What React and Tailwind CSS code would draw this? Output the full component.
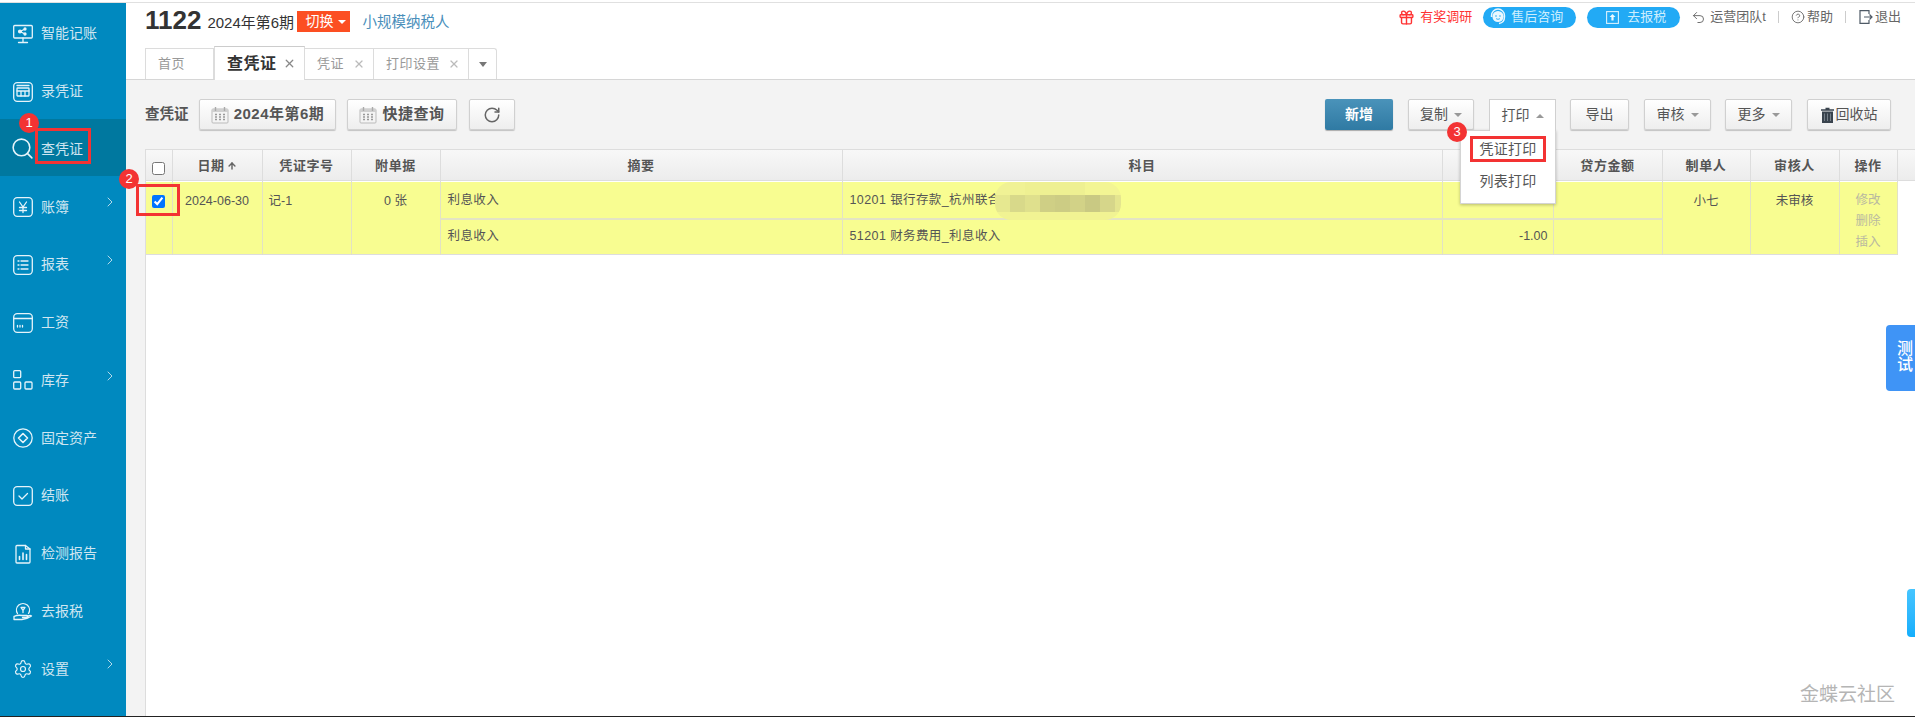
import React from 'react';
import { Search, ChevronRight, Settings, RotateCw, Gift, Undo2, CircleHelp, ArrowUp, X } from 'lucide-react';

const FONT = '"Liberation Sans", "Noto Sans CJK SC", sans-serif';

const Svg = ({ children }) => (
  <svg viewBox="0 0 20 20" className="w-5 h-5 shrink-0" fill="none" stroke="currentColor" strokeWidth="1.3" strokeLinecap="round" strokeLinejoin="round">
    {children}
  </svg>
);

const icons = {
  smart: (
    <Svg>
      <rect x="0.7" y="1.5" width="18.6" height="12.5" rx="1" />
      <path d="M10 14v4M5.5 18.5h9" />
      <circle cx="7" cy="7.5" r="1.4" fill="currentColor" />
      <circle cx="12" cy="5" r="1" fill="currentColor" />
      <circle cx="12" cy="10" r="1" fill="currentColor" />
      <path d="M7 7.5l5-2.5M7 7.5l5 2.5" />
    </Svg>
  ),
  entry: (
    <Svg>
      <rect x="0.7" y="0.7" width="18.6" height="18.6" rx="3.5" />
      <rect x="4" y="6" width="12" height="8" rx="0.5" />
      <path d="M4 9h12M8 9v5M12 9v5M4 3.5h12" />
    </Svg>
  ),
  search: <Search size={25} strokeWidth={1.5} className="-ml-0.5 -mt-0.5 shrink-0" />,
  ledger: (
    <Svg>
      <rect x="0.7" y="0.7" width="18.6" height="18.6" rx="3.5" />
      <path d="M6.5 5l3.5 5 3.5-5M6.5 10.5h7M6.5 13.5h7M10 10v5.5" />
    </Svg>
  ),
  report: (
    <Svg>
      <rect x="0.7" y="0.7" width="18.6" height="18.6" rx="3.5" />
      <path d="M5 6h1M8 6h7M5 10h1M8 10h7M5 14h1M8 14h7" />
    </Svg>
  ),
  salary: (
    <Svg>
      <rect x="0.7" y="0.7" width="18.6" height="18.6" rx="3.5" />
      <path d="M1 5.5h18M4.5 12.5v1.5M7 12.5v1.5M9.5 12.5v1.5" />
    </Svg>
  ),
  stock: (
    <Svg>
      <rect x="0.7" y="0.7" width="7" height="7" rx="1" />
      <rect x="0.7" y="12" width="7" height="7" rx="1" />
      <rect x="12" y="12" width="7" height="7" rx="1" />
    </Svg>
  ),
  asset: (
    <Svg>
      <circle cx="10" cy="10" r="9.2" />
      <path d="M10 5.5l4.5 4.5-4.5 4.5L5.5 10z" strokeWidth="1.6" />
    </Svg>
  ),
  close: (
    <Svg>
      <rect x="0.7" y="0.7" width="18.6" height="18.6" rx="3.5" />
      <path d="M6 10l3 3 5.5-5.5" />
    </Svg>
  ),
  check: (
    <Svg>
      <path d="M3 2.5a1 1 0 0 1 1-1h8.5L17 5v13a1 1 0 0 1-1 1H4a1 1 0 0 1-1-1z" />
      <path d="M12.5 1.5V5H17" />
      <path d="M6.5 15.5v-3M10 15.5V9M13.5 15.5v-5" strokeWidth="1.6" />
    </Svg>
  ),
  tax: (
    <Svg>
      <path d="M4.5 12.5a6.5 6.5 0 1 1 11 0" />
      <path d="M8 6.5h4l-2 3zM10 9.5v2" />
      <path d="M1 15.5c3-1.5 5-1.5 8-1h5c1.5 0 1.5 2 0 2H9.5M1 15.5v3h8c3 0 6-1 9.5-3.5-1-1-3-.5-4.5 1" />
    </Svg>
  ),
  settings: <Settings size={20} strokeWidth={1.4} />,
};

const menu = [
  { label: '智能记账', icon: icons.smart },
  { label: '录凭证', icon: icons.entry },
  { label: '查凭证', icon: icons.search, active: true },
  { label: '账簿', icon: icons.ledger, more: true },
  { label: '报表', icon: icons.report, more: true },
  { label: '工资', icon: icons.salary },
  { label: '库存', icon: icons.stock, more: true },
  { label: '固定资产', icon: icons.asset },
  { label: '结账', icon: icons.close },
  { label: '检测报告', icon: icons.check },
  { label: '去报税', icon: icons.tax },
  { label: '设置', icon: icons.settings, more: true },
];

const Badge = ({ n, className }) => (
  <span className={`absolute z-20 w-5 h-5 rounded-full bg-[#f33333] text-white text-[13px] flex items-center justify-center ${className}`}>
    {n}
  </span>
);

const Sidebar = () => (
  <aside className="relative w-[126px] shrink-0 bg-[#0089bf] text-[#cfe6f1]">
    {menu.map((item) => (
      <div key={item.label} className={`relative h-[57.75px] flex items-center pl-[13px] pr-3 pt-[4px] text-[14px] ${item.active ? 'bg-[#00789f]' : ''}`}>
        <span className="w-5 h-6 flex items-center justify-center text-[#e6f4fa]">{item.icon}</span>
        <span className="ml-2">{item.label}</span>
        {item.more && <ChevronRight size={16} strokeWidth={1.3} className="absolute left-[102px] top-[18px]" />}
      </div>
    ))}
    <Badge n="1" className="left-[19px] top-[110px]" />
    <span className="absolute left-[35px] top-[125px] w-[56px] h-[36px] border-[3px] border-[#f33333]" />
  </aside>
);

const Tab = ({ label, active, closable = true, className = '' }) => (
  <div className={`flex items-center whitespace-nowrap border-t border-r border-[#dcdcdc] bg-white ${active ? 'h-[34px] -mb-px font-bold text-[16px] text-[#333] pl-[12px] pr-[8px] border-l border-t-[#ccc]' : 'h-[31px] text-[13px] text-[#999] pl-3 pr-2'} ${className}`}>
    <span className="tracking-[0.5px]">{label}</span>
    {closable && <X size={active ? 13 : 12} strokeWidth={2.4} className={`ml-auto ${active ? 'text-[#888]' : 'text-[#bbb]'}`} />}
  </div>
);

const ServiceIcon = () => (
  <svg viewBox="0 0 18 18" className="w-[18px] h-[18px] shrink-0">
    <circle cx="9" cy="8.5" r="5.6" fill="#eaf7fe" />
    <path d="M2.5 9V7.5a6.5 6.5 0 0 1 13 0V9M15.5 9c0 3.5-2.5 6-5.5 6.5" fill="none" stroke="#eaf7fe" strokeWidth="1.4" />
    <circle cx="7" cy="8" r="0.8" fill="#22aaf5" />
    <circle cx="11" cy="8" r="0.8" fill="#22aaf5" />
    <path d="M7 10.5c1 1 3 1 4 0" fill="none" stroke="#22aaf5" strokeWidth="0.9" />
  </svg>
);

const UploadIcon = () => (
  <svg viewBox="0 0 13 13" className="w-[13px] h-[13px] shrink-0">
    <rect x="0.6" y="0.6" width="11.8" height="11.8" fill="none" stroke="#d9f1fd" strokeWidth="1.1" />
    <path d="M6.5 3l3 3H7.6v3.5H5.4V6H3.5z" fill="#eaf7fe" />
  </svg>
);

const ExitIcon = () => (
  <svg viewBox="0 0 16 16" className="w-[16px] h-[16px] shrink-0" fill="none" stroke="#4f5a66" strokeWidth="1.2">
    <path d="M11 5V1.6H2V14.4h9V11" />
    <path d="M6 8h8M11.5 5.5L14 8l-2.5 2.5" />
  </svg>
);

const Header = () => (
  <header className="h-[77px] shrink-0 border-b border-[#d6d6d6] bg-white flex flex-col">
    <div className="flex items-start pl-[19px] pr-[14px] h-[46px]">
      <span className="text-[26px] font-bold leading-[34px] text-[#333]">1122</span>
      <span className="ml-[6px] mt-[10px] text-[15px] leading-[20px] text-[#333] w-[90px] whitespace-nowrap">2024年第6期</span>
      <span className="mt-[8px] h-[21px] w-[53px] bg-[#fc4f22] text-white text-[14px] flex items-center pl-2">
        切换
        <span className="ml-[5px] border-x-[4px] border-t-[4px] border-x-transparent border-t-white" />
      </span>
      <span className="ml-3 mt-[9px] text-[14.5px] leading-[20px] text-[#4a8fbb]">小规模纳税人</span>
      <div className="ml-auto flex items-center h-[28px] text-[13px] text-[#666]">
        <Gift size={17} strokeWidth={2} className="text-[#f33]" />
        <span className="ml-[5px] text-[#f33]">有奖调研</span>
        <span className="ml-[11px] w-[93px] h-[21px] rounded-full bg-[#22aaf5] text-[#cdeefd] flex items-center pl-[6px] gap-[4px]">
          <ServiceIcon />
          售后咨询
        </span>
        <span className="ml-[11px] w-[93px] h-[21px] rounded-full bg-[#22aaf5] text-[#cdeefd] flex items-center pl-[19px] gap-[8px]">
          <UploadIcon />
          去报税
        </span>
        <Undo2 size={15} strokeWidth={1.5} className="ml-[11px]" />
        <span className="ml-[4px]">运营团队t</span>
        <span className="ml-3 h-[12px] w-px bg-[#ccc]" />
        <CircleHelp size={14} strokeWidth={1.5} className="ml-3" />
        <span className="ml-[2px]">帮助</span>
        <span className="ml-3 h-[12px] w-px bg-[#ccc]" />
        <span className="ml-3"><ExitIcon /></span>
        <span className="ml-[1px]">退出</span>
      </div>
    </div>
    <div className="flex items-end ml-[19px] mt-auto h-[34px]">
      <Tab label="首页" closable={false} className="w-[69px] border-l" />
      <Tab label="查凭证" active className="w-[91px]" />
      <Tab label="凭证" className="w-[69px]" />
      <Tab label="打印设置" className="w-[95px]" />
      <div className="h-[31px] w-[28px] flex items-center justify-center border-t border-r border-[#dcdcdc] rounded-tr-[3px]">
        <span className="border-x-[4px] border-t-[5px] border-x-transparent border-t-[#777]" />
      </div>
    </div>
  </header>
);

const CalIcon = () => (
  <svg viewBox="0 0 18 18" className="w-[18px] h-[18px] mr-[5px] shrink-0">
    <rect x="1" y="3" width="16" height="14" rx="1" fill="#f4f4f4" stroke="#bbbbbb" />
    <rect x="1" y="3" width="16" height="3" fill="#d0d0d0" />
    <path d="M4.5 1v4M13.5 1v4" stroke="#aaaaaa" strokeWidth="1.4" />
    <path d="M4 8.5h2M8 8.5h2M12 8.5h2M4 11h2M8 11h2M12 11h2M4 13.5h2M8 13.5h2M12 13.5h2" stroke="#999999" strokeWidth="1.3" />
  </svg>
);

const TrashIcon = () => (
  <svg viewBox="0 0 13 16" className="w-[13px] h-[16px] mr-[2px] shrink-0">
    <path d="M4.5 1.5h4M0 3h13" stroke="#39434d" strokeWidth="1.5" />
    <path d="M1 4.5h11V16H1z" fill="#39434d" />
    <path d="M3.5 6.5v7.5M6.5 6.5v7.5M9.5 6.5v7.5" stroke="#7d8790" strokeWidth="0.9" />
  </svg>
);

const btn = 'h-[31px] flex items-center justify-center rounded-[2px] border border-[#d0d0d0] bg-linear-to-b from-white to-[#eeeeee] shadow-[0_1px_1px_rgba(0,0,0,0.2)] text-[14px] text-[#555]';

const Caret = ({ up }) => (
  <span className={`ml-[6px] border-x-[4px] border-x-transparent ${up ? 'border-b-[4px] border-b-[#999]' : 'border-t-[4px] border-t-[#999]'}`} />
);

const Toolbar = () => (
  <div className="relative h-[69px] shrink-0 flex items-center pl-[19px] pr-[24px]">
    <span className="w-[54px] text-[14.5px] font-bold text-[#555]">查凭证</span>
    <button className={`${btn} w-[137px] text-[15px]! font-bold tracking-[0.5px]`}>
      <CalIcon />2024年第6期
    </button>
    <button className={`${btn} w-[110px] ml-[11px] text-[15px]! font-bold tracking-[0.5px]`}>
      <CalIcon />快捷查询
    </button>
    <button className={`${btn} w-[46px] ml-3`}>
      <RotateCw size={18} strokeWidth={2} className="text-[#666]" />
    </button>
    <button className="ml-auto w-[68px] h-[31px] rounded-[2px] bg-linear-to-b from-[#4a93ba] to-[#2f7aa3] shadow-[0_1px_1px_rgba(0,0,0,0.3)] text-[14px] font-bold text-white">新增</button>
    <button className={`${btn} w-[66px] ml-[15px]`}>复制<Caret /></button>
    <div className="relative ml-[15px] w-[67px] h-[31px]">
      <button className="w-full h-[32px] relative z-20 flex items-center justify-center border border-b-0 border-[#d0d0d0] bg-white text-[14px] text-[#555]">打印<Caret up /></button>
    </div>
    <button className={`${btn} w-[59px] ml-[14px]`}>导出</button>
    <button className={`${btn} w-[67px] ml-[15px]`}>审核<Caret /></button>
    <button className={`${btn} w-[67px] ml-[14px]`}>更多<Caret /></button>
    <button className={`${btn} w-[84px] ml-[15px]`}>
      <TrashIcon />回收站
    </button>
  </div>
);

const Dropdown = () => (
  <div className="absolute z-10 left-[1334px] top-[127px] w-[96px] h-[74px] border border-[#d4d4d4] bg-white shadow-[0_1px_3px_rgba(0,0,0,0.25)] text-[14px] text-[#555] flex flex-col items-center pt-[5px]">
    <span className="h-[26px] w-[76px] shrink-0 flex items-center justify-center outline-[3px] outline-[#f33333] -outline-offset-[3px] tracking-[0.3px]">凭证打印</span>
    <span className="mt-[7px] h-[25px] flex items-center tracking-[0.3px]">列表打印</span>
  </div>
);

// 打码区域：马赛克色块
const Mosaic = () => (
  <span className="absolute left-[145px] -top-[9px] w-[126px] h-[38px] rounded-[16px] overflow-hidden flex flex-col">
    <span className="h-[13px] flex">
      <span className="w-[30px] bg-[#f0f295]" />
      <span className="w-[60px] bg-[#eef092]" />
      <span className="w-[36px] bg-[#f3f594]" />
    </span>
    <span className="h-[17px] flex">
      <span className="w-[15px] bg-[#e6e890]" />
      <span className="w-[15px] bg-[#d8d98a]" />
      <span className="w-[15px] bg-[#dfe08d]" />
      <span className="w-[15px] bg-[#cfcf85]" />
      <span className="w-[15px] bg-[#cccc84]" />
      <span className="w-[15px] bg-[#d2d287]" />
      <span className="w-[15px] bg-[#c9c983]" />
      <span className="w-[15px] bg-[#d6d68a]" />
      <span className="w-[6px] bg-[#e4e58f]" />
    </span>
    <span className="h-[8px] bg-[#f1f393]" />
  </span>
);

const th = 'border-r border-[#dddddd] font-bold text-[13px] tracking-[0.6px] text-[#555]';
const td = 'border-r border-[#e2e2c4] text-[12.5px] text-[#555] font-normal';
const tdTop = `${td} align-top pt-[10px]`;

const VoucherTable = () => (
  <table className="table-fixed border-collapse w-[1751px]">
    <colgroup>
      {[26, 90, 89, 89, 402, 600, 111, 109, 88, 89, 58].map((w, i) => (
        <col key={i} style={{ width: w }} />
      ))}
    </colgroup>
    <thead>
      <tr className="h-[32px]">
        <th className={th}><input type="checkbox" readOnly className="block mx-auto mt-[4px]" /></th>
        <th className={th}>日期<ArrowUp size={10} strokeWidth={3.5} className="inline ml-[2px] -mt-px text-[#666]" /></th>
        <th className={th}>凭证字号</th>
        <th className={th}>附单据</th>
        <th className={th}>摘要</th>
        <th className={th}>科目</th>
        <th className={th}>借方金额</th>
        <th className={th}>贷方金额</th>
        <th className={th}>制单人</th>
        <th className={th}>审核人</th>
        <th className={th}>操作</th>
      </tr>
    </thead>
    <tbody className="bg-[#f8fd91] border-b border-[#dddddd]">
      <tr className="h-[37px] border-b-2 border-[#e4e4c4]">
        <td rowSpan={2} className={`${td} align-top pt-[13px]`}><input type="checkbox" readOnly checked className="block mx-auto" /></td>
        <td rowSpan={2} className={`${tdTop} text-center`}>2024-06-30</td>
        <td rowSpan={2} className={`${tdTop} pl-[6px]`}>记-1</td>
        <td rowSpan={2} className={`${tdTop} text-center`}>0 张</td>
        <td className={`${td} pl-[7px] tracking-[0.4px]`}>利息收入</td>
        <td className={`${td} pl-[7px] tracking-[0.4px]`}>
          <div className="relative">
            10201 银行存款_杭州联合
            <Mosaic />
          </div>
        </td>
        <td className={td} />
        <td className={td} />
        <td rowSpan={2} className={`${tdTop} text-center`}>小七</td>
        <td rowSpan={2} className={`${tdTop} text-center`}>未审核</td>
        <td rowSpan={2} className={`${td} align-top pt-[8px] text-center leading-[21px] text-[#b9b9a0]`}>修改<br />删除<br />插入</td>
      </tr>
      <tr className="h-[35px]">
        <td className={`${td} pl-[7px] tracking-[0.4px]`}>利息收入</td>
        <td className={`${td} pl-[7px] tracking-[0.4px]`}>51201 财务费用_利息收入</td>
        <td className={`${td} text-right pr-[5px]`}>-1.00</td>
        <td className={td} />
      </tr>
    </tbody>
  </table>
);

const Overlays = () => (
  <>
    <Badge n="2" className="left-[119px] top-[169px]" />
    <span className="absolute z-20 left-[136px] top-[184px] w-[44px] h-[32px] border-[3px] border-[#f33333]" />
    <Badge n="3" className="left-[1447px] top-[122px]" />
    <div className="absolute z-20 right-0 top-[325px] w-[29px] h-[66px] rounded-l-[4px] bg-[#3f94f6] text-white text-[16px] leading-[16px] pl-[11px] pt-[16px] font-medium">测<br />试</div>
    <div className="absolute z-20 right-0 top-[589px] w-[8px] h-[48px] rounded-l-[4px] bg-linear-to-b from-[#45c5ff] to-[#12aefc]" />
    <div className="absolute z-20 left-[1800px] top-[682px] text-[19px] leading-[26px] text-[#b5b5b5]">金蝶云社区</div>
  </>
);

export default function App() {
  return (
    <div className="relative w-[1915px] h-[717px] overflow-hidden flex flex-col bg-white" style={{ fontFamily: FONT }}>
      <div className="h-[3px] shrink-0 border-b border-[#e0e0e0]" />
      <div className="flex-1 min-h-0 flex">
        <Sidebar />
        <main className="relative flex-1 min-w-0 flex flex-col bg-[#f3f3f3]">
          <Header />
          <Toolbar />
          <div className="ml-[19px] flex-1 bg-white border-l border-[#dddddd]">
            <div className="bg-linear-to-b from-[#f8f8f8] to-[#ececec] border-y border-[#dddddd] h-[32px]">
              <VoucherTable />
            </div>
          </div>
          <Dropdown />
        </main>
      </div>
      <div className="h-px shrink-0 bg-[#222]" />
      <Overlays />
    </div>
  );
}
